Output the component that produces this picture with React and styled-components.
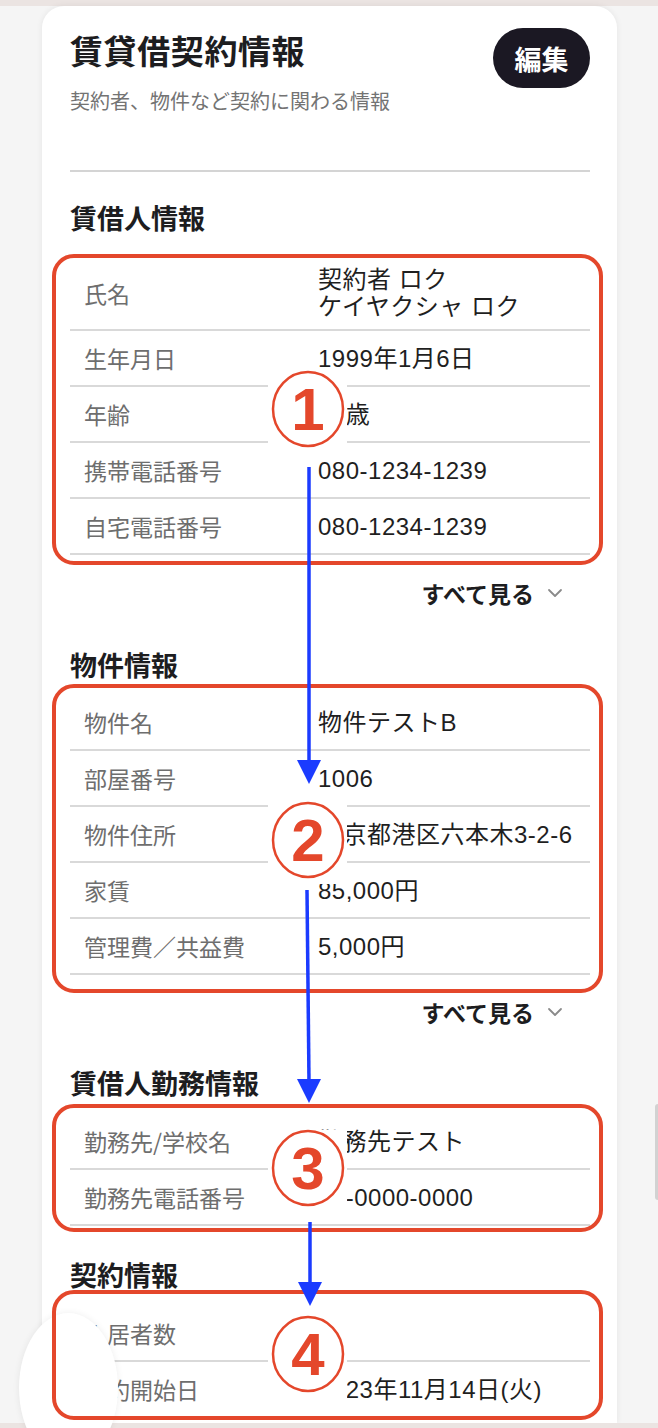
import React from 'react'
import styled, { createGlobalStyle } from 'styled-components'

const GlobalStyle = createGlobalStyle`
    html, body {
        margin: 0;
        padding: 0;
        background: #f5f5f5;
    }
    body {
        font-family: "Liberation Sans", "Noto Sans CJK JP", sans-serif;
        color: #1d1d1f;
    }
`

const RED = '#e4472b'
const BLUE = '#1b3bff'

const Page = styled.div`
    position: relative;
    width: 658px;
    height: 1428px;
    overflow: hidden;
    background: #f5f5f5;
    display: flex;
    flex-direction: column;
`

const Strip = styled.div`
    flex: 0 0 ${(p) => p.h}px;
    background: #ebe4e2;
`

const Card = styled.div`
    flex: 1;
    margin-left: 42px;
    width: 575px;
    box-sizing: border-box;
    padding: 22px 27px 0 28px;
    background: #fff;
    border-radius: 22px 22px 0 0;
    box-shadow: 0 0 6px rgba(0, 0, 0, 0.07);
`

const Header = styled.div`
    display: flex;
    justify-content: space-between;
    align-items: flex-start;
`

const Title = styled.h1`
    margin: 0;
    font-family: "Noto Sans CJK JP", sans-serif;
    font-size: 33px;
    line-height: 44px;
    font-weight: 700;
    letter-spacing: 0.6px;
    color: #1d1d1f;
`

const Subtitle = styled.p`
    margin: 15px 0 0;
    font-family: "Noto Sans CJK JP", sans-serif;
    font-size: 20px;
    line-height: 28px;
    color: #737373;
`

const EditButton = styled.button`
    width: 97px;
    height: 60px;
    border: none;
    border-radius: 30px;
    background: #1b1823;
    color: #fff;
    font-family: "Noto Sans CJK JP", sans-serif;
    font-size: 27px;
    font-weight: 700;
    cursor: pointer;
`

const Divider = styled.hr`
    margin: 55px 0 0;
    border: none;
    height: 2px;
    background: #d4d4d4;
`

const Heading = styled.h2`
    margin: ${(p) => p.top}px 0 0;
    font-family: "Noto Sans CJK JP", sans-serif;
    font-size: 27px;
    line-height: 36px;
    font-weight: 700;
    color: #1d1d1f;
`

const List = styled.dl`
    position: relative;
    margin: ${(p) => p.top}px 0 0;

    &::after {
        content: '';
        position: absolute;
        top: ${(p) => p.frame[0]}px;
        bottom: ${(p) => p.frame[1]}px;
        left: -18px;
        right: -13px;
        border: 4px solid ${RED};
        border-radius: 22px;
        z-index: 2;
        pointer-events: none;
    }
`

const Row = styled.div`
    display: grid;
    grid-template-columns: 234px 1fr;
    align-items: center;
    box-sizing: border-box;
    min-height: 56px;
    padding: ${(p) => (p.tight ? '1px 14px 9px' : '6px 14px')};
    border-bottom: 2px solid #d9d9d9;
`

const Label = styled.dt`
    font-family: "Noto Sans CJK JP", sans-serif;
    font-size: 23px;
    line-height: 27px;
    color: #6e6e6e;
`

const Value = styled.dd`
    margin: 0;
    font-size: 24px;
    line-height: 27px;
    letter-spacing: 0.5px;
    color: #1f1f1f;
    white-space: pre-line;
`

const SeeAll = styled.div`
    margin-top: ${(p) => p.top}px;
    display: flex;
    justify-content: flex-end;
    align-items: center;
    gap: 13px;
    padding-right: 27px;
    font-family: "Noto Sans CJK JP", sans-serif;
    font-size: 23px;
    line-height: 32px;
    font-weight: 700;
    color: #1d1d1f;
`

const Blob = styled.div`
    position: absolute;
    left: 19px;
    top: 1313px;
    width: 99px;
    height: 150px;
    border-radius: 50%;
    background: #fff;
    box-shadow: 0 0 7px rgba(0, 0, 0, 0.07);
    z-index: 1;
`

const EdgePeek = styled.div`
    position: absolute;
    right: 0;
    top: 1104px;
    width: 3px;
    height: 96px;
    border-radius: 3px 0 0 3px;
    background: #d2d2d2;
`

const Overlay = styled.svg`
    position: absolute;
    top: 0;
    left: 0;
    z-index: 3;
    pointer-events: none;
`

const sections = [
    {
        title: '賃借人情報',
        headTop: 28,
        listTop: 29,
        frame: [-11, -10],
        seeAll: 22,
        rows: [
            ['氏名', '契約者 ロク\nケイヤクシャ ロク'],
            ['生年月日', '1999年1月6日'],
            ['年齢', '24歳'],
            ['携帯電話番号', '080-1234-1239'],
            ['自宅電話番号', '080-1234-1239'],
        ],
    },
    {
        title: '物件情報',
        headTop: 38,
        listTop: 12,
        frame: [-11, -18],
        seeAll: 21,
        rows: [
            ['物件名', '物件テストB'],
            ['部屋番号', '1006'],
            ['物件住所', '東京都港区六本木3-2-6'],
            ['家賃', '85,000円'],
            ['管理費／共益費', '5,000円'],
        ],
    },
    {
        title: '賃借人勤務情報',
        headTop: 37,
        listTop: 13,
        frame: [-10, -6],
        rows: [
            ['勤務先/学校名', '勤務先テスト'],
            ['勤務先電話番号', '03-0000-0000'],
        ],
    },
    {
        title: '契約情報',
        headTop: 31,
        listTop: 13,
        frame: [-16, -2],
        rows: [
            ['入居者数', '1'],
            ['契約開始日', '2023年11月14日(火)'],
        ],
    },
]

// circled step numbers: centre y, and how far the white backing reaches above / below
const markers = [
    { n: '1', cy: 409, up: 38, down: 39 },
    { n: '2', cy: 840, up: 38, down: 44 },
    { n: '3', cy: 1168, up: 38, down: 39 },
    { n: '4', cy: 1354, up: 38, down: 52 },
]

const arrows = [
    { x1: 309, y1: 467, x2: 309, y2: 784 },
    { x1: 307, y1: 890, x2: 309, y2: 1103 },
    { x1: 310, y1: 1222, x2: 310, y2: 1306 },
]

const Chevron = () => (
    <svg width="16" height="10" viewBox="0 0 16 10">
        <polyline points="2,2 8,8 14,2" fill="none" stroke="#8a8a8a" strokeWidth="1.8" strokeLinecap="round" strokeLinejoin="round" />
    </svg>
)

const Annotations = () => (
    <Overlay width="658" height="1428" viewBox="0 0 658 1428">
        {markers.map(({ n, cy, up, down }) => (
            <g key={n}>
                <rect x="268" y={cy - up} width="79" height={up + down} fill="#fff" />
                <ellipse cx="308" cy={cy} rx="35" ry="37" fill="#fff" stroke={RED} strokeWidth="2.5" />
                <text
                    x="308"
                    y={cy + 21}
                    textAnchor="middle"
                    fontFamily="Liberation Sans, sans-serif"
                    fontWeight="700"
                    fontSize="60"
                    fill={RED}
                >
                    {n}
                </text>
            </g>
        ))}
        {arrows.map((a, i) => (
            <g key={i}>
                <line x1={a.x1} y1={a.y1} x2={a.x2} y2={a.y2 - 22} stroke={BLUE} strokeWidth="3.5" />
                <polygon points={`${a.x2 - 12},${a.y2 - 24} ${a.x2 + 12},${a.y2 - 24} ${a.x2},${a.y2}`} fill={BLUE} />
            </g>
        ))}
    </Overlay>
)

export default function App() {
    return (
        <Page>
            <GlobalStyle />
            <Strip h={6} />
            <Card>
                <Header>
                    <div>
                        <Title>賃貸借契約情報</Title>
                        <Subtitle>契約者、物件など契約に関わる情報</Subtitle>
                    </div>
                    <EditButton>編集</EditButton>
                </Header>
                <Divider />
                {sections.map((s) => (
                    <section key={s.title}>
                        <Heading top={s.headTop}>{s.title}</Heading>
                        <List top={s.listTop} frame={s.frame}>
                            {s.rows.map(([label, value]) => (
                                <Row key={label} tight={value.includes('\n')}>
                                    <Label>{label}</Label>
                                    <Value>{value}</Value>
                                </Row>
                            ))}
                        </List>
                        {s.seeAll && (
                            <SeeAll top={s.seeAll}>
                                すべて見る
                                <Chevron />
                            </SeeAll>
                        )}
                    </section>
                ))}
            </Card>
            <Strip h={5} />
            <Blob />
            <EdgePeek />
            <Annotations />
        </Page>
    )
}
